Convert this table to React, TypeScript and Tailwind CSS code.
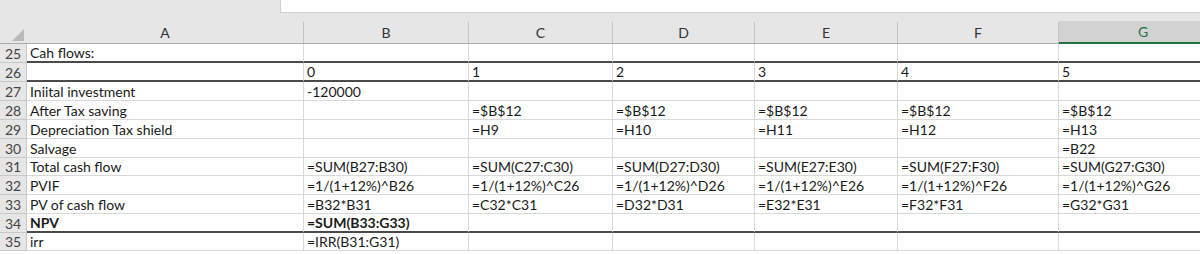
import React from "react";

const cols = [
  { key: "A", w: "w-[277px]" },
  { key: "B", w: "w-[165px]" },
  { key: "C", w: "w-[144px]" },
  { key: "D", w: "w-[142px]" },
  { key: "E", w: "w-[143px]" },
  { key: "F", w: "w-[161px]" },
  { key: "G", w: "w-[168px]" },
];

type Row = {
  n: number;
  h: string;
  cells: string[];
  bold?: boolean;
  thick?: boolean;
};

const rows: Row[] = [
  { n: 25, h: "h-[19px]", cells: ["Cah flows:", "", "", "", "", "", ""], thick: true },
  { n: 26, h: "h-[19px]", cells: ["", "0", "1", "2", "3", "4", "5"], thick: true },
  { n: 27, h: "h-[19px]", cells: ["Iniital investment", "-120000", "", "", "", "", ""] },
  { n: 28, h: "h-[19px]", cells: ["After Tax saving", "", "=$B$12", "=$B$12", "=$B$12", "=$B$12", "=$B$12"] },
  { n: 29, h: "h-[19px]", cells: ["Depreciation Tax shield", "", "=H9", "=H10", "=H11", "=H12", "=H13"] },
  { n: 30, h: "h-[19px]", cells: ["Salvage", "", "", "", "", "", "=B22"] },
  {
    n: 31,
    h: "h-[18px]",
    cells: ["Total cash flow", "=SUM(B27:B30)", "=SUM(C27:C30)", "=SUM(D27:D30)", "=SUM(E27:E30)", "=SUM(F27:F30)", "=SUM(G27:G30)"],
  },
  {
    n: 32,
    h: "h-[19px]",
    cells: ["PVIF", "=1/(1+12%)^B26", "=1/(1+12%)^C26", "=1/(1+12%)^D26", "=1/(1+12%)^E26", "=1/(1+12%)^F26", "=1/(1+12%)^G26"],
  },
  {
    n: 33,
    h: "h-[19px]",
    cells: ["PV of cash flow", "=B32*B31", "=C32*C31", "=D32*D31", "=E32*E31", "=F32*F31", "=G32*G31"],
  },
  { n: 34, h: "h-[19px]", cells: ["NPV", "=SUM(B33:G33)", "", "", "", "", ""], bold: true, thick: true },
  { n: 35, h: "h-[18px]", cells: ["irr", "=IRR(B31:G31)", "", "", "", "", ""] },
];

export default function App() {
  return (
    <div className="h-[254px] w-[1200px] overflow-hidden bg-white font-['Lato',sans-serif] text-[14px] text-[#1a1a1a]">
      {/* formula bar strip */}
      <div className="flex h-[13px] bg-[#e6e6e6]">
        <div className="w-[280px]" />
        <div className="flex-1 border-b border-l border-[#d0d0d0] bg-white" />
      </div>
      {/* column headers */}
      <div className="flex h-[31px] w-max border-b border-[#ababab] bg-[#e6e6e6]">
        <div className="flex w-[27px] items-end justify-end border-r border-transparent pb-[2px] pr-[2px]">
          <svg width="12" height="12" viewBox="0 0 12 12">
            <polygon points="12,0 12,12 0,12" fill="#b9b9b9" />
          </svg>
        </div>
        {cols.map((c) => (
          <div key={c.key} className={`${c.w} flex flex-col`}>
            <div className="h-[12px]" />
            <div
              className={
                c.key === "G"
                  ? "flex flex-1 items-center justify-center border-b-2 border-[#217346] bg-[#d2d2d2] text-[#217346] -mb-px"
                  : "flex flex-1 items-center justify-center border-r border-[#c4c4c4] text-[#333]"
              }
            >
              {c.key}
            </div>
          </div>
        ))}
      </div>
      {/* rows */}
      {rows.map((r) => (
        <div key={r.n} className={`flex w-max ${r.h}`}>
          <div className="flex w-[27px] items-center justify-center border-r border-b border-[#c8c8c8] bg-[#e6e6e6] text-[#444]">
            {r.n}
          </div>
          {cols.map((c, i) => (
            <div
              key={c.key}
              className={`${c.w} flex items-center overflow-visible whitespace-nowrap border-r border-[#d9d9d9] pl-[3px] ${
                r.thick ? "border-b-2 border-b-[#4a4a4a]" : "border-b border-b-[#d9d9d9]"
              } ${r.bold ? "font-bold" : ""}`}
            >
              {r.cells[i]}
            </div>
          ))}
        </div>
      ))}
    </div>
  );
}
